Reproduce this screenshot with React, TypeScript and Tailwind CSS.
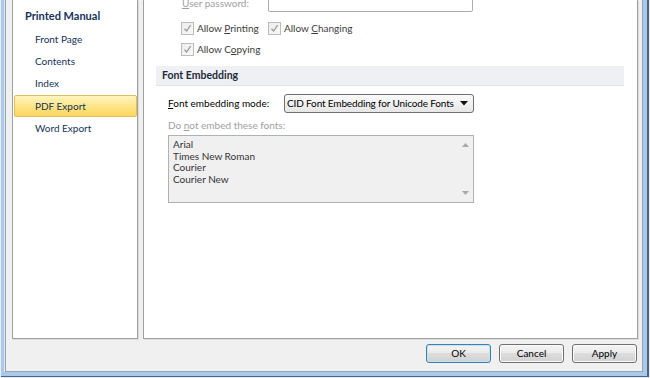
import React from "react";

const font = { fontFamily: "Lato, 'Noto Sans', sans-serif" };

function Check() {
  return (
    <div className="w-[13px] h-[13px] border border-[#bcbcbc] bg-gradient-to-br from-[#ececec] to-[#f8f8f8] flex items-center justify-center shrink-0">
      <svg width="9" height="9" viewBox="0 0 9 9">
        <path d="M1.5 4.8 L3.6 7 L7.6 1.2" fill="none" stroke="#9a9a9a" strokeWidth="1.3" />
      </svg>
    </div>
  );
}

function Btn({ label, def }: { label: string; def?: boolean }) {
  return (
    <div
      className={
        "w-[65px] h-[19px] rounded-[3px] border flex items-center justify-center text-[10px] text-black bg-[linear-gradient(#f4f4f4_0%,#ebebeb_45%,#dddddd_50%,#d2d2d2_100%)] " +
        (def ? "border-[#3c7fb1] shadow-[inset_0_0_0_1px_#bfe3f7]" : "border-[#707070] shadow-[inset_0_0_0_1px_#fbfbfb]")
      }
    >
      {label}
    </div>
  );
}

export default function App() {
  const items = ["Front Page", "Contents", "Index", "PDF Export", "Word Export"];
  return (
    <div style={font} className="w-[650px] h-[378px] overflow-hidden bg-[#e6edf5]">
      <div className="w-full h-full border-l border-r border-b border-[#e7eef6]">
        <div className="w-full h-full border-r-2 border-b border-[#53627a]">
          <div className="w-full h-full border-l-[3px] border-r-[4px] border-b-[4px] border-[#a9c9ec]">
            <div className="w-full h-full border-l border-[#dfe7ef]">
              <div className="w-full h-full border-l border-r border-b border-[#9aa3ad] bg-[#f0f0f0] flex flex-col pl-[6px] pr-[4px]">
                <div className="flex h-[339px]">
                  {/* Left panel */}
                  <div className="w-[126px] h-full bg-white border-l border-r border-b border-[#a0a0a0] shadow-[1px_1px_0_#dcdcdc] flex flex-col">
                    <div className="h-[28px] pl-[12px] pt-[9px] text-[11px] leading-[14px] font-bold text-[#15325a]">
                      Printed Manual
                    </div>
                    {items.map((it) =>
                      it === "PDF Export" ? (
                        <div
                          key={it}
                          className="h-[22.5px] ml-[1px] rounded-[2px] border border-[#e3bf5c] bg-[linear-gradient(#fff4bf,#fde27f_60%,#fbd65f)] pl-[20px] flex items-center text-[10px] text-[#15325a]"
                        >
                          {it}
                        </div>
                      ) : (
                        <div key={it} className="h-[22.25px] pl-[22px] flex items-center text-[10px] text-[#15325a]">
                          {it}
                        </div>
                      )
                    )}
                  </div>
                  <div className="w-[5px]" />
                  {/* Right panel */}
                  <div className="w-[495px] h-full bg-white border-l border-r border-b border-[#a0a0a0] shadow-[1px_1px_0_#dcdcdc] flex flex-col text-[10px]">
                    <div className="h-[12px] flex items-end overflow-hidden">
                      <div className="pl-[38px] w-[124px] leading-[14px] mb-[2px] text-[#a0a0a0] whitespace-nowrap">
                        <span className="underline">U</span>ser password:
                      </div>
                      <div className="w-[205px] h-[20px] border border-[#abadb3] rounded-[2px] bg-white" />
                    </div>
                    <div className="h-[10px]" />
                    <div className="flex items-center h-[13px] pl-[37px]">
                      <div className="flex items-center gap-[3px] w-[87px]">
                        <Check />
                        <span className="text-[#3c3c3c]">
                          Allow <span className="underline">P</span>rinting
                        </span>
                      </div>
                      <div className="flex items-center gap-[3px]">
                        <Check />
                        <span className="text-[#3c3c3c]">
                          Allow <span className="underline">C</span>hanging
                        </span>
                      </div>
                    </div>
                    <div className="h-[8px]" />
                    <div className="flex items-center h-[13px] pl-[37px]">
                      <div className="flex items-center gap-[3px]">
                        <Check />
                        <span className="text-[#3c3c3c]">
                          Allow C<span className="underline">o</span>pying
                        </span>
                      </div>
                    </div>
                    <div className="h-[10px]" />
                    <div className="ml-[12px] mr-[13px] h-[20px] shrink-0 bg-[#eef0f3] border-b border-[#dfe2e6] pl-[6px] flex items-center text-[10.5px] font-bold text-[#1e2a3a]">
                      Font Embedding
                    </div>
                    <div className="h-[8px]" />
                    <div className="flex items-center h-[19px] shrink-0 pl-[24px]">
                      <div className="w-[116px] text-black whitespace-nowrap">
                        <span className="underline">F</span>ont embedding mode:
                      </div>
                      <div className="w-[190px] h-[19px] rounded-[3px] border border-[#707070] bg-[linear-gradient(#fafafa,#f1f1f1_50%,#e6e6e6)] flex items-center pl-[2px] pr-[5px] text-black">
                        <span className="flex-1 whitespace-nowrap tracking-[-0.15px]">CID Font Embedding for Unicode Fonts</span>
                        <svg width="8" height="5" viewBox="0 0 8 5">
                          <path d="M0 0 H8 L4 4.5 Z" fill="#111" />
                        </svg>
                      </div>
                    </div>
                    <div className="h-[5px]" />
                    <div className="pl-[24px] h-[14px] shrink-0 leading-[14px] text-[#a0a0a0]">
                      Do <span className="underline">n</span>ot embed these fonts:
                    </div>
                    <div className="h-[3px]" />
                    <div className="ml-[24px] w-[306px] h-[68px] shrink-0 border border-[#adb2b5] bg-[#f0f0f0] flex">
                      <div className="flex-1 pl-[4px] pt-[3px] text-[#333] leading-[11.7px]">
                        <div>Arial</div>
                        <div>Times New Roman</div>
                        <div>Courier</div>
                        <div>Courier New</div>
                      </div>
                      <div className="w-[16px] flex flex-col items-center justify-between py-[7px]">
                        <svg width="7" height="4" viewBox="0 0 7 4">
                          <path d="M0 4 H7 L3.5 0 Z" fill="#a8a8a8" />
                        </svg>
                        <svg width="7" height="4" viewBox="0 0 7 4">
                          <path d="M0 0 H7 L3.5 4 Z" fill="#a8a8a8" />
                        </svg>
                      </div>
                    </div>
                  </div>
                </div>
                <div className="flex justify-end gap-[8px] mt-[5px] pr-[1px]">
                  <Btn label="OK" def />
                  <Btn label="Cancel" />
                  <Btn label="Apply" />
                </div>
              </div>
            </div>
          </div>
        </div>
      </div>
    </div>
  );
}
